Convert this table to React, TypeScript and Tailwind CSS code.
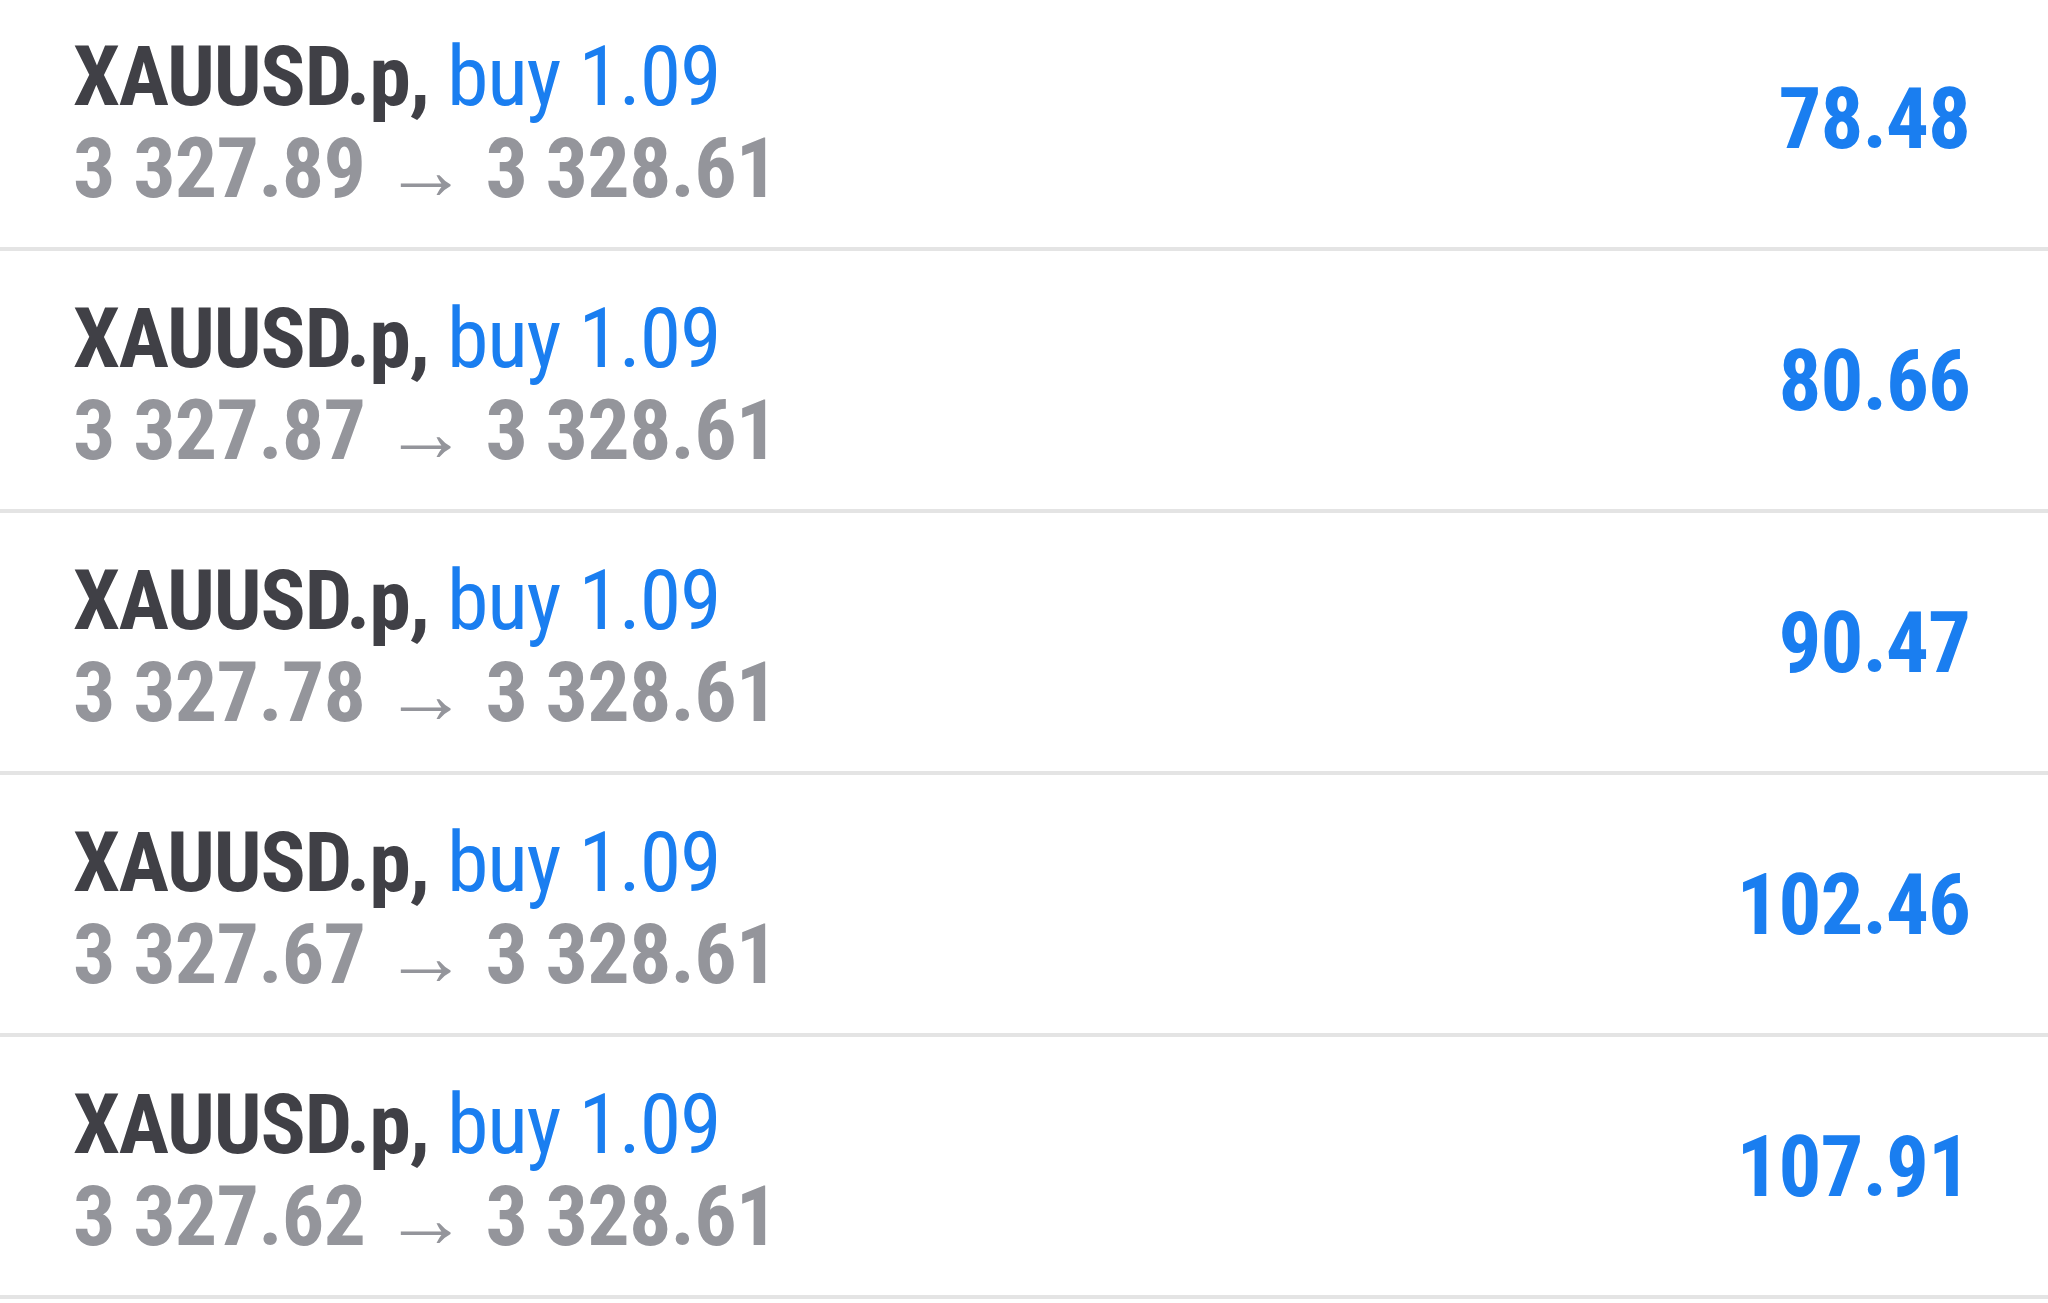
const rows = [
  { open: "3 327.89", profit: "78.48" },
  { open: "3 327.87", profit: "80.66" },
  { open: "3 327.78", profit: "90.47" },
  { open: "3 327.67", profit: "102.46" },
  { open: "3 327.62", profit: "107.91" },
];

export default function App() {
  return (
    <div
      className="w-[2048px] h-[1303px] overflow-hidden bg-white"
      style={{ fontFamily: "Roboto, 'Noto Sans', sans-serif", fontStretch: "75%" }}
    >
      <div className="-mt-[11px] flex flex-col">
        {rows.map((r, i) => (
          <div
            key={i}
            className="flex h-[262px] items-center justify-between border-b-[4px] border-[#e4e4e4] pl-[73px] pr-[78px]"
          >
            <div className="flex flex-col pt-[10px] text-[84px] leading-[92px]">
              <div className="whitespace-nowrap tracking-[-1.2px]">
                <span className="font-bold text-[#404046]">XAUUSD.p,</span>{" "}
                <span className="font-normal text-[#1a7ef0]">buy 1.09</span>
              </div>
              <div className="whitespace-nowrap font-bold tracking-[-0.8px] text-[#94959b]">
                {r.open} <span className="relative top-[2px] font-black">→</span> 3 328.61
              </div>
            </div>
            <div className="pt-[2px] text-[85px] font-bold leading-none tracking-[-1px] text-[#1a7ef0]">
              {r.profit}
            </div>
          </div>
        ))}
      </div>
    </div>
  );
}
